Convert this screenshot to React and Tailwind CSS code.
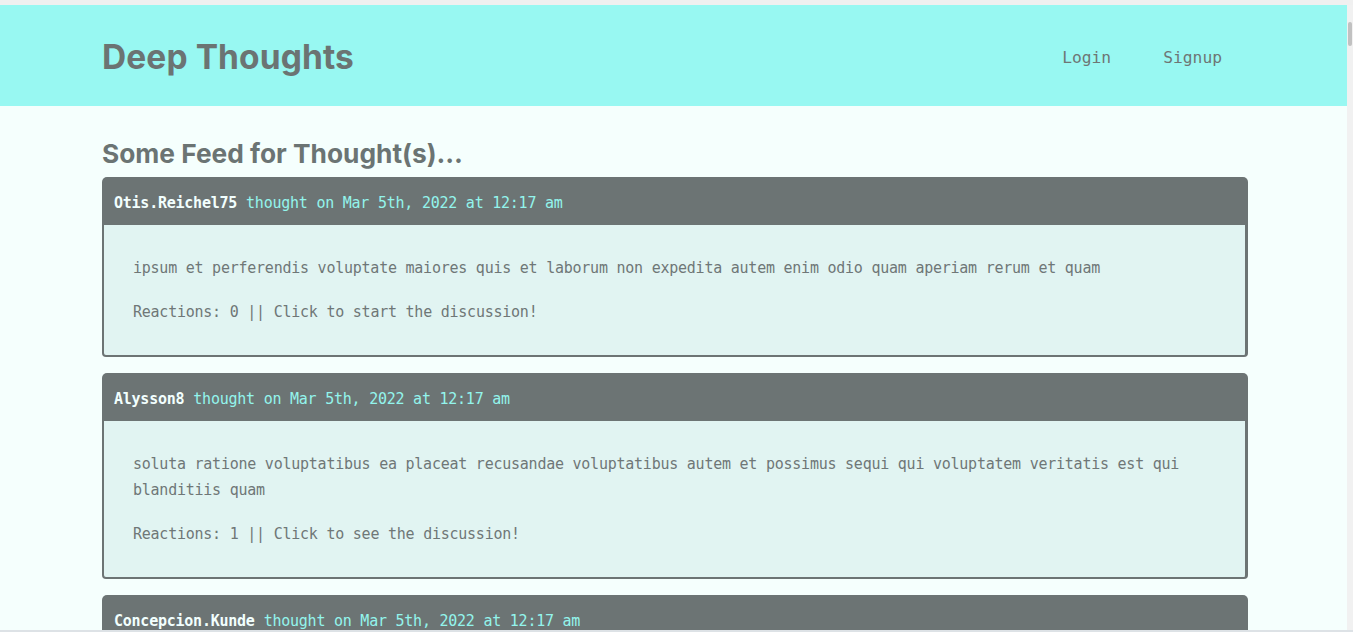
const thoughts = [
  {
    id: 1,
    username: 'Otis.Reichel75',
    createdAt: 'Mar 5th, 2022 at 12:17 am',
    text: 'ipsum et perferendis voluptate maiores quis et laborum non expedita autem enim odio quam aperiam rerum et quam',
    reactionCount: 0,
  },
  {
    id: 2,
    username: 'Alysson8',
    createdAt: 'Mar 5th, 2022 at 12:17 am',
    text: 'soluta ratione voluptatibus ea placeat recusandae voluptatibus autem et possimus sequi qui voluptatem veritatis est qui blanditiis quam',
    reactionCount: 1,
  },
  {
    id: 3,
    username: 'Concepcion.Kunde',
    createdAt: 'Mar 5th, 2022 at 12:17 am',
    text: 'voluptas quia qui nemo est eum aut et accusantium',
    reactionCount: 2,
  },
]

const mono = { fontFamily: '"DejaVu Sans Mono", "Liberation Mono", monospace' }
const sans = { fontFamily: 'Inter, "Noto Sans", sans-serif' }

function ThoughtCard({ thought }) {
  return (
    <div className="mb-4">
      <div className="h-12 flex items-center px-3 pt-[5px] bg-[#6c7474] rounded-t-[5px] text-[15px] tracking-[-0.24px]">
        <span className="font-bold text-[#f2fffe]">{thought.username}</span>
        <span className="ml-[9px] text-[#93f4ec]">thought on {thought.createdAt}</span>
      </div>
      <div className="bg-[#e1f4f2] border-[#6c7474] border-l-2 border-r-[3px] border-b-2 rounded-b-[4px] pl-[29px] pr-6 pt-[30px] pb-[30px] text-[15px] tracking-[-0.24px] leading-[26px] text-[#6f7777]">
        <p>{thought.text}</p>
        <p className="mt-[18px]">
          Reactions: {thought.reactionCount} || Click to{' '}
          {thought.reactionCount ? 'see' : 'start'} the discussion!
        </p>
      </div>
    </div>
  )
}

export default function App() {
  return (
    <div className="h-[632px] overflow-hidden flex flex-col bg-[#f5fffd]" style={mono}>
      <div className="h-[5px] bg-[#f0f0f0] shrink-0" />
      <div className="flex flex-1 min-h-0">
        <div className="flex-1 flex flex-col min-w-0">
          <header className="h-[101px] shrink-0 bg-[#98f8f2]">
            <div className="w-[1146px] ml-[102px] h-full flex items-center justify-between pt-[3px]">
              <h1 className="text-[33.5px] font-bold text-[#6b7473] tracking-[0.1px]" style={sans}>
                Deep Thoughts
              </h1>
              <nav className="flex items-center gap-[52px] pr-[26px] pt-[2px] text-[16.3px] text-[#6e7675]">
                <a href="#">Login</a>
                <a href="#">Signup</a>
              </nav>
            </div>
          </header>
          <main className="w-[1146px] ml-[102px]">
            <h2 className="mt-[33px] mb-[8px] text-[26.3px] leading-[30px] font-bold text-[#6b7473]" style={sans}>
              Some Feed for Thought(s)…
            </h2>
            {thoughts.map((thought) => (
              <ThoughtCard key={thought.id} thought={thought} />
            ))}
          </main>
        </div>
        <div className="w-[6px] shrink-0 bg-[#f1f1f1] flex flex-col">
          <div className="mt-[17px] h-[24px] mx-[1px] bg-[#c1c1c1] rounded-sm" />
        </div>
      </div>
      <div className="h-[2px] shrink-0 bg-[#dde2e6]" />
    </div>
  )
}
